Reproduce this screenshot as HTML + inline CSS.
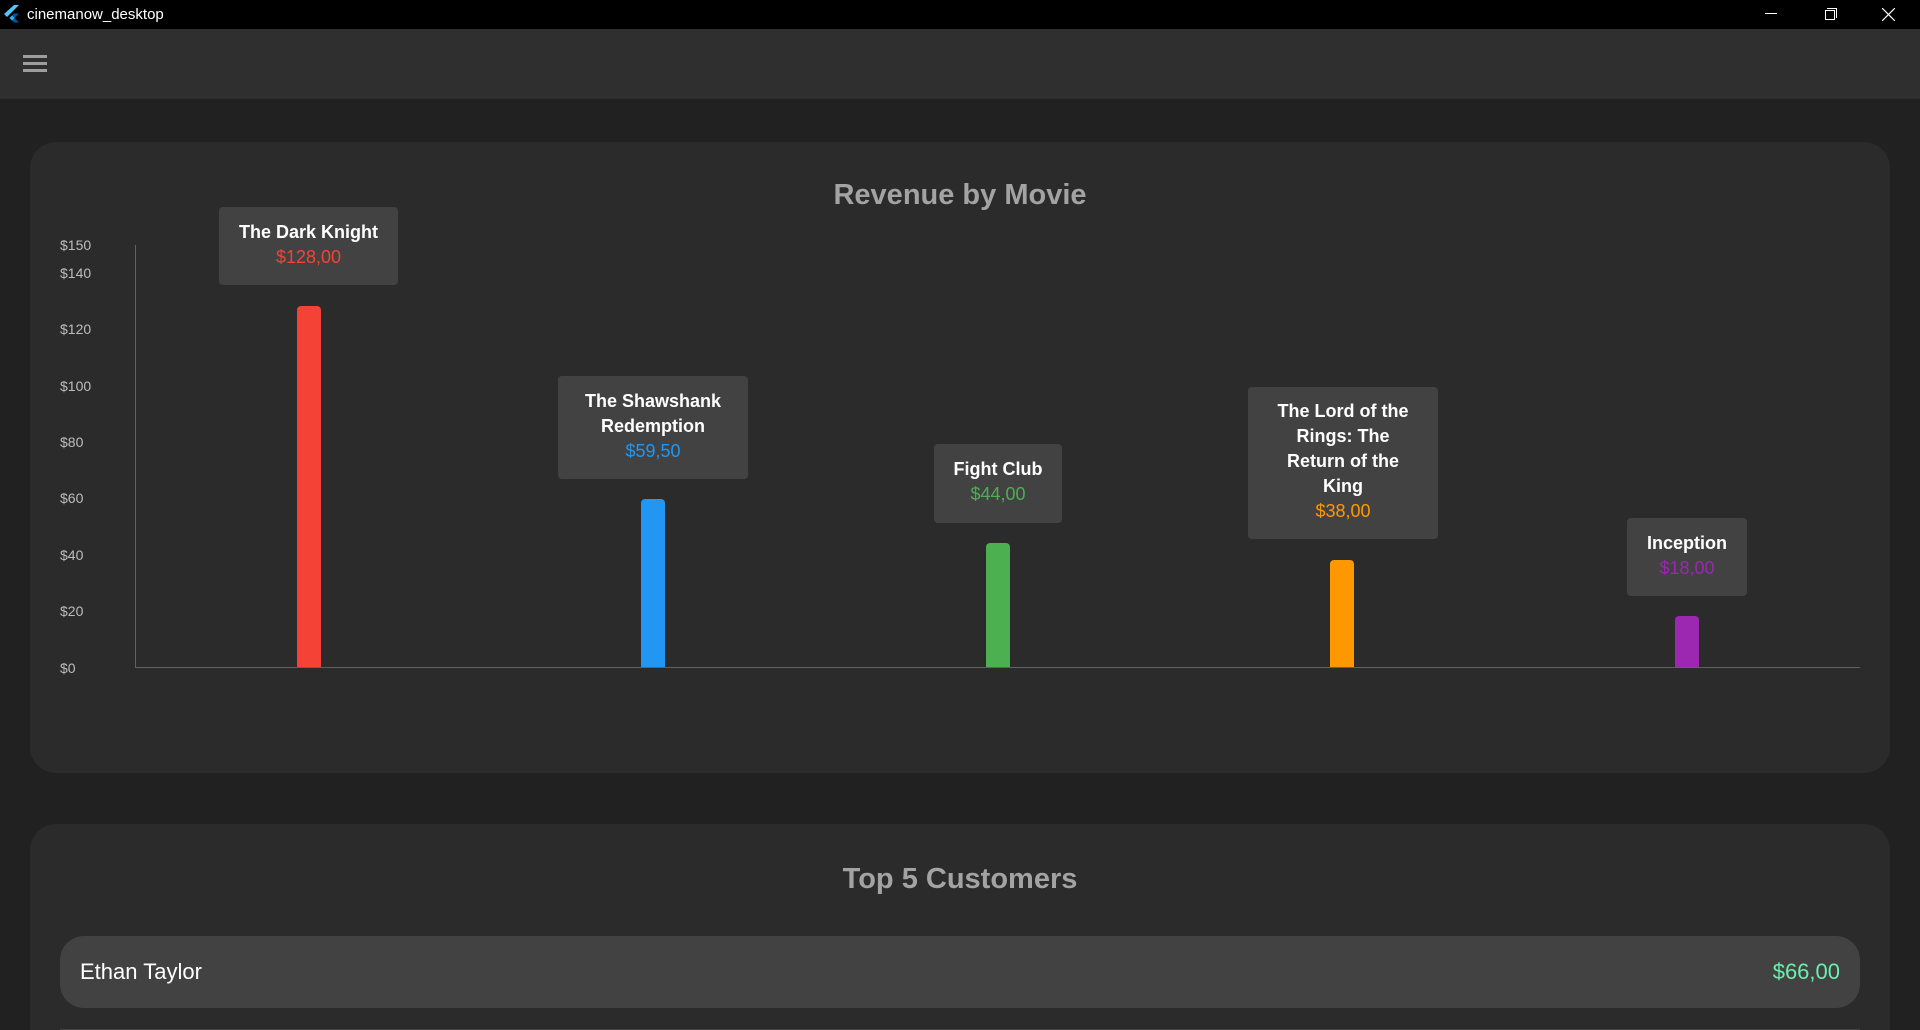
<!DOCTYPE html>
<html style="width:1920px;height:1030px;overflow:hidden"><head><meta charset="utf-8"><style>
*{margin:0;padding:0;box-sizing:border-box}
body{width:1920px;height:1030px;overflow:hidden;background:#212121;font-family:"Liberation Sans",sans-serif;position:relative}
#w{position:absolute;left:0;top:0;width:1920px;height:1030px;overflow:hidden}
.tb{position:absolute;left:0;top:0;width:1920px;height:29px;background:#000;color:#fff;font-size:15px}
.ab{position:absolute;left:0;top:29px;width:1920px;height:70px;background:#2f2f2f}
.card{position:absolute;left:30px;width:1860px;background:#2b2b2b;border-radius:26px}
.h{position:absolute;left:0;width:100%;text-align:center;color:#a3a3a3;font-weight:bold;font-size:29px}
.yl{position:absolute;left:60px;color:#bdbdbd;font-size:14px;transform:translateY(-50%)}
.bar{position:absolute;width:24px;border-radius:4px 4px 0 0}
.tt{position:absolute;background:#424242;border-radius:4px;text-align:center;font-size:18px;line-height:25px;display:flex;flex-direction:column;justify-content:center;padding-bottom:3px}
.tt b{color:#fff}
</style></head><body><div id="w">
<div class="tb">
<svg style="position:absolute;left:4px;top:5px" width="16" height="18" viewBox="0 0 16 18"><path d="M10 0L0 9l3 3L15 0z" fill="#54c5f8"/><path d="M15 8.5H10L5.5 13l4.5 4.5h5L10.5 13z" fill="#01579b"/><path d="M5.5 13L8 10.5 10.5 13 8 15.5z" fill="#29b6f6"/></svg>
<span style="position:absolute;left:27px;top:6px">cinemanow_desktop</span>
<div style="position:absolute;left:1765px;top:13px;width:12px;height:1px;background:#fff"></div>
<div style="position:absolute;left:1825px;top:10px;width:10px;height:10px;border:1px solid #fff"></div>
<div style="position:absolute;left:1827px;top:8px;width:10px;height:10px;border-top:1px solid #fff;border-right:1px solid #fff"></div>
<svg style="position:absolute;left:1882px;top:8px" width="13" height="13"><path d="M0 0L13 13M13 0L0 13" stroke="#fff" stroke-width="1.2"/></svg>
</div>
<div class="ab">
<div style="position:absolute;left:23px;top:26px;width:24px;height:3px;background:#9e9e9e"></div>
<div style="position:absolute;left:23px;top:33px;width:24px;height:3px;background:#9e9e9e"></div>
<div style="position:absolute;left:23px;top:40px;width:24px;height:3px;background:#9e9e9e"></div>
</div>
<div class="card" style="top:142px;height:631px"><div class="h" style="top:37px">Revenue by Movie</div></div>
<div class="yl" style="top:245px">$150</div><div class="yl" style="top:273px">$140</div><div class="yl" style="top:329px">$120</div><div class="yl" style="top:386px">$100</div><div class="yl" style="top:442px">$80</div><div class="yl" style="top:498px">$60</div><div class="yl" style="top:555px">$40</div><div class="yl" style="top:611px">$20</div><div class="yl" style="top:668px">$0</div>
<div style="position:absolute;left:135px;top:245px;width:1px;height:423px;background:#616161"></div>
<div style="position:absolute;left:135px;top:667px;width:1725px;height:1px;background:#616161"></div>
<div class="bar" style="left:297px;top:306px;height:361px;background:#f44336"></div>
<div class="bar" style="left:641px;top:499px;height:168px;background:#2196f3"></div>
<div class="bar" style="left:986px;top:543px;height:124px;background:#4caf50"></div>
<div class="bar" style="left:1330px;top:560px;height:107px;background:#ff9800"></div>
<div class="bar" style="left:1675px;top:616px;height:51px;background:#9c27b0"></div>
<div class="tt" style="left:219px;top:207px;width:179px;height:78px"><b>The Dark Knight</b><span style="color:#f44336">$128,00</span></div>
<div class="tt" style="left:558px;top:376px;width:190px;height:103px"><b>The Shawshank<br>Redemption</b><span style="color:#2196f3">$59,50</span></div>
<div class="tt" style="left:934px;top:444px;width:128px;height:79px"><b>Fight Club</b><span style="color:#4caf50">$44,00</span></div>
<div class="tt" style="left:1248px;top:387px;width:190px;height:152px"><b>The Lord of the<br>Rings: The<br>Return of the<br>King</b><span style="color:#ff9800">$38,00</span></div>
<div class="tt" style="left:1627px;top:518px;width:120px;height:78px"><b>Inception</b><span style="color:#9c27b0">$18,00</span></div>
<div class="card" style="top:824px;height:206px;border-radius:26px 26px 0 0"><div class="h" style="top:39px">Top 5 Customers</div></div>
<div style="position:absolute;left:60px;top:936px;width:1800px;height:72px;background:#424242;border-radius:24px">
<span style="position:absolute;left:20px;top:23px;color:#fff;font-size:22px">Ethan Taylor</span>
<span style="position:absolute;right:20px;top:23px;color:#69f0ae;font-size:22px">$66,00</span></div>
<div style="position:absolute;left:60px;top:1029px;width:1800px;height:1px;background:#424242"></div>
</div></body></html>
